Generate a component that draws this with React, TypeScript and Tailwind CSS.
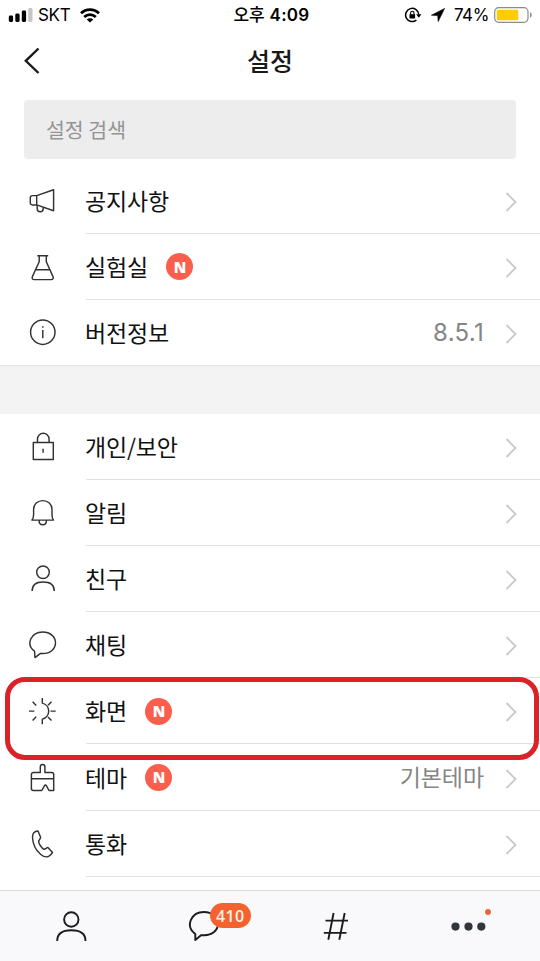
import type { ReactNode } from 'react';

const stroke = {
  fill: 'none',
  stroke: 'currentColor',
  strokeWidth: 1.45,
  strokeLinejoin: 'round' as const,
};

function Glyph({ children }: { children: ReactNode }) {
  return (
    <svg viewBox="0 0 32 32" className="h-8 w-8 shrink-0 text-[#303236]" {...stroke}>
      {children}
    </svg>
  );
}

const glyphs = {
  notice: (
    <Glyph>
      <path d="M9.700 10.600 26.600 4.700v21L9.700 19.900z" />
      <path d="M9.700 10.600H5.200a1.900 1.900 0 0 0-1.900 1.900v5.500a1.900 1.900 0 0 0 1.900 1.900h4.500" />
      <path d="M10.200 20v3.800a3 3 0 0 0 6 0v-1.600" />
    </Glyph>
  ),
  lab: (
    <Glyph>
      <path d="M10.300 4.700H21.200M12.200 4.700v6L5.400 25.600c-.8 1.700 0 3 1.900 3h16.800c1.900 0 2.700-1.300 1.900-3L19.300 10.700v-6M8.700 18.700h14.500" />
    </Glyph>
  ),
  info: (
    <Glyph>
      <circle cx="15.800" cy="15.200" r="12.200" />
      <path d="M15.800 13v8.300M15.800 9.300v1.500" />
    </Glyph>
  ),
  lock: (
    <Glyph>
      <path d="M6.300 11.500h20V28.500h-20zM10.500 11.500V8a5.800 5.800 0 0 1 11.600 0v3.500M16.100 17.700v4" />
    </Glyph>
  ),
  bell: (
    <Glyph>
      <path d="M5 23.100h21.500C25.200 21.500 25 20 25 17.500v-5c0-5.200-4-8.900-9.200-8.900s-9.200 3.700-9.200 8.900v5c0 2.500-.2 4-1.600 5.600zM12.100 23.400c0 5.700 7.300 5.700 7.300 0" />
    </Glyph>
  ),
  person: (
    <Glyph>
      <circle cx="16" cy="9.200" r="6.300" />
      <path d="M5.100 28c0-6 4.200-9 11-9s11.200 3 11.200 9" />
    </Glyph>
  ),
  chat: (
    <Glyph>
      <path d="M7.500 22.200C-1.500 15.500 3.800 3 15.700 3c7.400 0 12.800 4.700 12.800 10.800S23.500 24.500 15.700 24.500l-2.200-.1-5.500 4.200z" />
    </Glyph>
  ),
  screen: (
    <Glyph>
      <path d="M15.300 2.900v5.200a8.200 8.200 0 0 1 0 16v5.200M23.500 16.100h5.200M21 10.300l3.500-3.500M21 21.900l3.500 3.500M5.600 6.800 9.200 10.400M2 16.100h5.300M5.600 25.400l3.600-3.600" />
    </Glyph>
  ),
  theme: (
    <Glyph>
      <path d="M13.300 10.400V4.800a2.300 2.300 0 0 1 4.600 0v5.600h6.800a2 2 0 0 1 2 2v16.100H22l-2.500-4.700c-.6-1-1.500-1-2.100 0l-2.600 4.700H6.400a2 2 0 0 1-2-2V12.400a2 2 0 0 1 2-2zM4.400 16.700h22.300" />
    </Glyph>
  ),
  phone: (
    <Glyph>
      <path d="M11 3C8 3.200 5.400 5.300 5.500 9.300c.2 6 3.200 13 8.300 17.200 2.500 2 5.400 3 7.800 1.800 1.900-.9 3.100-2.200 3.900-3.900l-4.600-5c-1.500.2-2.200 1.900-3.900 1.900-2.300-1.300-5-5-5.400-7.700.1-1.800 2-2.400 2-4.300z" />
    </Glyph>
  ),
};

type Item = {
  icon: keyof typeof glyphs;
  label: string;
  isNew?: boolean;
  value?: string;
  valueClass?: string;
  marked?: boolean;
};

const general: Item[] = [
  { icon: 'notice', label: '공지사항' },
  { icon: 'lab', label: '실험실', isNew: true },
  { icon: 'info', label: '버전정보', value: '8.5.1', valueClass: 'text-[24px] tracking-[0.3px]' },
];

const preferences: Item[] = [
  { icon: 'lock', label: '개인/보안' },
  { icon: 'bell', label: '알림' },
  { icon: 'person', label: '친구' },
  { icon: 'chat', label: '채팅' },
  { icon: 'screen', label: '화면', isNew: true, marked: true },
  {
    icon: 'theme',
    label: '테마',
    isNew: true,
    value: '기본테마',
    valueClass: 'mt-[2px] text-[23px] tracking-[-0.1px]',
  },
  { icon: 'phone', label: '통화' },
];

function NewBadge() {
  return (
    <span className="ml-[18.500px] mt-px flex h-[27px] w-[27px] items-center justify-center rounded-full bg-[#fa5f4e] font-['Open_Sans',sans-serif] text-[15px] font-extrabold text-white">
      N
    </span>
  );
}

function Row({ item, last }: { item: Item; last?: boolean }) {
  return (
    <li className={`relative flex pl-[27px] ${last ? 'h-[65.2px]' : 'h-[66.2px]'}`}>
      <div className="flex w-[59px] items-center">{glyphs[item.icon]}</div>
      <div className={`flex flex-1 items-center pr-[23px] ${last ? '' : 'border-b border-[#e1e1e1]'}`}>
        <span className="-ml-px mb-px text-[23px] leading-8 tracking-[-0.2px] text-[#111]">{item.label}</span>
        {item.isNew && <NewBadge />}
        {item.value && (
          <span
            className={`ml-auto font-['Inter','Noto_Sans_CJK_KR',sans-serif] leading-8 text-[#868686] ${item.valueClass}`}
          >
            {item.value}
          </span>
        )}
        <svg
          viewBox="0 0 12 20"
          className={`mt-[3px] h-5 w-3 text-[#c9c9c9] ${item.value ? 'ml-[21px]' : 'ml-auto'}`}
          fill="none"
          stroke="currentColor"
          strokeWidth="1.800"
        >
          <path d="m1.500 1 9 9-9 9" />
        </svg>
      </div>
      {item.marked && (
        <span className="absolute -top-px left-[5px] right-px z-10 h-[83px] rounded-[20px] border-[5px] border-[#dc2229]" />
      )}
    </li>
  );
}

function StatusBar() {
  return (
    <div className="grid h-[30px] grid-cols-3 items-center font-['Inter','Noto_Sans_CJK_KR',sans-serif] text-black">
      <div className="flex items-center pl-2">
        <svg viewBox="0 0 25 16" className="h-4 w-[25px]">
          <rect x=".8" y="8.500" width="4.300" height="6.500" rx="1.400" />
          <rect x="7.300" y="6.500" width="4.300" height="8.500" rx="1.400" />
          <rect x="13.800" y="3.500" width="4.300" height="11.500" rx="1.400" />
          <rect x="20.200" y="1" width="4.300" height="14" rx="1.400" fill="#c6c6c6" />
        </svg>
        <span className="ml-[5px] text-[17px] leading-5 tracking-[-0.3px]">SKT</span>
        <svg viewBox="0 0 20 15" className="ml-[10px] h-[15px] w-5" fill="none" stroke="currentColor" strokeWidth="2.700">
          <path d="M1 5.300c5-5 13-5 18 0M4.200 9c3.300-3.200 8.300-3.200 11.600 0" />
          <path d="M10 14.500 6.700 11.500c1.800-1.700 4.800-1.700 6.600 0z" fill="currentColor" stroke="none" />
        </svg>
      </div>
      <div className="pl-[3px] text-center text-[17px] leading-5">
        <span className="font-medium">오후</span> <span className="font-semibold tracking-[0.3px]">4:09</span>
      </div>
      <div className="flex items-center justify-end pr-[7px]">
        <svg viewBox="0 0 18 16" className="h-4 w-[18px]" fill="none" stroke="currentColor" strokeWidth="1.500">
          <path d="M14.800 7.500a6.600 6.600 0 1 0-2.400 5.600" />
          <path d="M12.200 7.200h5.200l-2.600 3.600z" fill="currentColor" stroke="none" />
          <path d="M5.500 7.200h5.600v4.300H5.500z" fill="currentColor" stroke="none" />
          <path d="M6.600 7.500V6A1.700 1.700 0 0 1 10 6v1.500" strokeWidth="1.100" />
        </svg>
        <svg viewBox="0 0 14 14" className="ml-[9px] h-[14px] w-[14px]" stroke="currentColor" strokeWidth=".6" strokeLinejoin="round">
          <path d="M13.600.4.400 7.200l6.300.4.500 6z" />
        </svg>
        <span className="ml-[9px] text-[17px] leading-5 tracking-[-0.4px]">74%</span>
        <svg viewBox="0 0 39 16" className="ml-[5px] h-4 w-[39px]">
          <rect x=".7" y=".7" width="33.300" height="14.600" rx="4" fill="none" stroke="#8c8c8c" strokeWidth="1.200" />
          <rect x="2.800" y="2.800" width="21.500" height="10.400" rx="1.500" fill="#fc0" />
          <path d="M36 5.300c2.300.8 2.300 4.600 0 5.400z" fill="#8c8c8c" />
        </svg>
      </div>
    </div>
  );
}

function TabBar() {
  return (
    <nav className="relative flex h-[71px] border-t border-[#dcdcde] bg-[#f9f9fb] px-[5px] text-[#1b1c20]">
      <div className="flex flex-1 items-center justify-center">
        <svg viewBox="0 0 32 32" className="h-8 w-8" fill="none" stroke="currentColor" strokeWidth="1.900">
          <circle cx="16.300" cy="9.500" r="7.200" />
          <path d="M2.200 31c0-7.500 5.500-10.700 14.100-10.700s14.200 3.200 14.200 10.700" />
        </svg>
      </div>
      <div className="flex flex-1 items-center justify-center">
        <div className="relative">
          <svg viewBox="0 0 32 32" className="h-8 w-8" fill="none" stroke="currentColor" strokeWidth="1.900" strokeLinejoin="round">
            <path d="M7.300 24C-3.500 15.800 3.500 2 16 2c8 0 14 5 14 11.600 0 7-5.800 11.600-14 11.600l-2.700-.1-6 5z" />
          </svg>
          <span className="absolute -top-[7px] left-[22px] flex h-[25px] w-[41px] items-center justify-center rounded-full bg-[#f4632f] font-['Open_Sans',sans-serif] text-[16px] font-semibold leading-none tracking-[0.3px] text-[#fff1e6]">
            410
          </span>
        </div>
      </div>
      <div className="flex flex-1 items-center justify-center">
        <svg viewBox="0 0 32 32" className="h-8 w-8" fill="none" stroke="currentColor" strokeWidth="1.900">
          <path d="M13.600 3 8.300 29.800M24.700 3l-5.400 26.800M5.500 10.600h22.500M3.800 22.900h22.700" />
        </svg>
      </div>
      <div className="flex flex-1 items-center justify-center">
        <svg viewBox="0 0 42 32" className="h-8 w-[42px]" fill="#30363b">
          <circle cx="7.500" cy="16.600" r="4.100" />
          <circle cx="20.500" cy="16.600" r="4.100" />
          <circle cx="33.300" cy="16.600" r="4.100" />
        </svg>
      </div>
      <span className="absolute right-[49px] top-[18px] h-[6px] w-[6px] rounded-full bg-[#e4683c]" />
    </nav>
  );
}

export default function App() {
  return (
    <div className="flex h-[961px] w-[540px] flex-col overflow-hidden bg-white font-['Noto_Sans_CJK_KR',sans-serif]">
      <StatusBar />
      <header className="grid h-[61px] shrink-0 grid-cols-3 items-center px-6">
        <svg viewBox="0 0 18 28" className="h-7 w-[18px]" fill="none" stroke="#1a1a1a" strokeWidth="2.400">
          <path d="M14.500 1.500 1.800 13.800 14.500 26" />
        </svg>
        <h1 className="mb-[2px] text-center text-[25px] font-medium leading-8 text-[#191919]">설정</h1>
      </header>
      <div className="mx-6 mt-[9px] flex h-[59px] shrink-0 items-center rounded-[4px] bg-[#ededed] pl-[22px] text-[20.500px] text-[#949494]">
        설정 검색
      </div>
      <main className="flex-1 overflow-hidden pt-[8.600px]">
        <ul>
          {general.map((item, i) => (
            <Row key={item.label} item={item} last={i === general.length - 1} />
          ))}
        </ul>
        <div className="h-[48.400px] border-t border-[#e2e2e2] bg-[#f3f3f3]" />
        <ul>
          {preferences.map((item) => (
            <Row key={item.label} item={item} />
          ))}
        </ul>
      </main>
      <TabBar />
    </div>
  );
}
